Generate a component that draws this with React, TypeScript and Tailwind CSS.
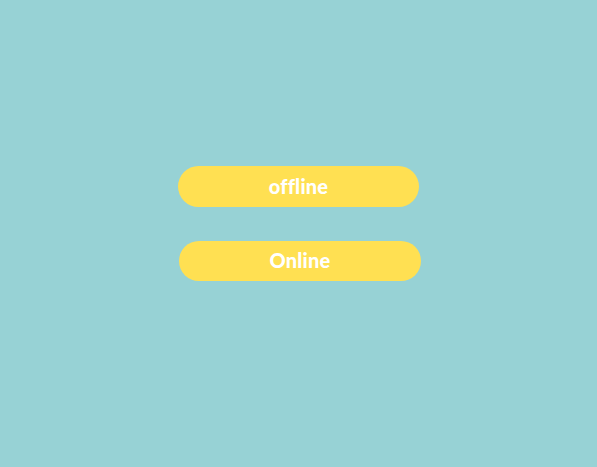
export default function App() {
  return (
    <div className="w-[597px] h-[467px] bg-[#97d2d5] flex flex-col items-center pt-[166px]" style={{ fontFamily: "Lato, 'DejaVu Sans', sans-serif" }}>
      <button className="w-[241px] h-[41px] pb-[2px] rounded-full bg-[#ffe052] text-white text-[20px] font-black tracking-[0.2px] flex items-center justify-center">
        offline
      </button>
      <button className="mt-[34px] ml-[3px] w-[242px] h-[40px] pb-[2px] rounded-full bg-[#ffe052] text-white text-[20px] font-black tracking-[0.2px] flex items-center justify-center">
        Online
      </button>
    </div>
  );
}
